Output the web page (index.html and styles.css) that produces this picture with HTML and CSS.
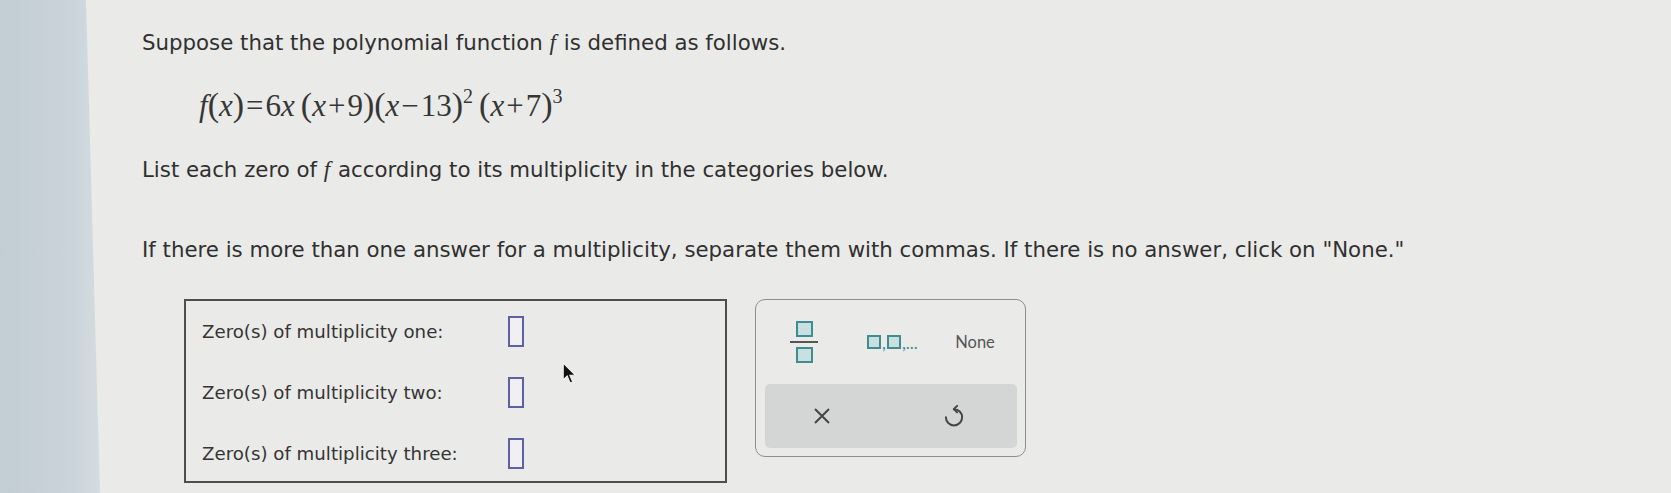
FILE: index.html
```html
<!DOCTYPE html>
<html lang="en">
<head>
<meta charset="utf-8">
<title>Polynomial zeros</title>
<link rel="stylesheet" href="styles.css">
</head>
<body>
<div class="edge"></div>
<main class="main">
  <p class="text line1">Suppose that the polynomial function <i class="fn">f</i> is defined as follows.</p>
  <div class="formula"><i>f</i><span class="par">(</span><i>x</i><span class="par">)</span><span class="op">=</span>6<i>x</i><span class="gap"></span><span class="par">(</span><i>x</i><span class="op">+</span>9<span class="par">)(</span><i>x</i><span class="op">−</span>13<span class="par">)</span><sup>2</sup><span class="gap"></span><span class="par">(</span><i>x</i><span class="op">+</span>7<span class="par">)</span><sup>3</sup></div>
  <p class="text line3">List each zero of <i class="fn">f</i> according to its multiplicity in the categories below.</p>
  <p class="text line4">If there is more than one answer for a multiplicity, separate them with commas. If there is no answer, click on "None."</p>
  <div class="answer">
    <div class="box">
      <div class="label">Zero(s) of multiplicity one:</div><div class="field"></div>
      <div class="label">Zero(s) of multiplicity two:</div><div class="field"></div>
      <div class="label">Zero(s) of multiplicity three:</div><div class="field"></div>
    </div>
    <div class="panel">
      <div class="tools">
        <div class="tool">
          <div class="frac"><span class="sq"></span><span class="bar"></span><span class="sq"></span></div>
        </div>
        <div class="tool">
          <div class="list"><span class="sq small"></span><span class="cm">,</span><span class="sq small"></span><span class="cm">,...</span></div>
        </div>
        <div class="tool none">None</div>
      </div>
      <div class="actions">
        <div class="act act-x">
          <svg width="20" height="20" viewBox="0 0 20 20"><path d="M3 3 L17 17 M17 3 L3 17" stroke="#454545" stroke-width="2" fill="none"/></svg>
        </div>
        <div class="act">
          <svg width="30" height="30" viewBox="0 0 24 24"><path d="M12 6.5 A6.5 6.5 0 1 1 5.5 13" stroke="#454545" stroke-width="1.6" fill="none" stroke-linecap="round"/><path d="M14.5 3.9 L11.8 6.5 L14.5 9.1" stroke="#454545" stroke-width="1.6" fill="none" stroke-linecap="round" stroke-linejoin="round"/></svg>
        </div>
      </div>
    </div>
  </div>
</main>
<svg class="cursor" width="15" height="23" viewBox="0 0 14 22"><path d="M1 1 L1 17 L4.8 13.4 L7.6 20 L10 19 L7.3 12.6 L12.5 12.6 Z" fill="#111" stroke="#f2f2f2" stroke-width="1"/></svg>
</body>
</html>
```

FILE: styles.css
```css
html, body {
  margin: 0;
  padding: 0;
}
body {
  width: 1671px;
  height: 493px;
  overflow: hidden;
  display: flex;
  background: #eaeae8;
  color: #303030;
  font-family: "DejaVu Sans", Verdana, sans-serif;
  position: relative;
}
.edge {
  width: 100px;
  flex: 0 0 100px;
  background: linear-gradient(90deg, #c3cdd4 0%, #c9d3d9 70%, #d4dce0 100%);
  clip-path: polygon(0 0, 86px 0, 100px 100%, 0 100%);
}
.main {
  flex: 1;
  padding: 31px 0 0 42px;
}
.text {
  margin: 0;
  font-size: 21.3px;
  line-height: 24px;
  white-space: nowrap;
}
.fn {
  font-family: "Liberation Serif", serif;
  font-size: 23px;
  margin-right: 1px;
}
.formula {
  margin: 33px 0 0 57px;
  font-family: "Liberation Serif", "Times New Roman", serif;
  font-size: 31px;
  line-height: 36px;
  color: #363636;
  white-space: nowrap;
}
.formula .par {
  font-size: 34px;
  line-height: 0;
}
.formula sup {
  font-size: 20px;
  line-height: 0;
  vertical-align: 13px;
}
.formula .op {
  margin: 0 2px;
}
.formula .gap {
  display: inline-block;
  width: 6px;
}
.line3 {
  margin-top: 34px;
}
.line4 {
  margin-top: 56px;
}
.answer {
  display: flex;
  align-items: flex-start;
  gap: 28px;
  margin: 37px 0 0 42px;
}
.box {
  border: 2px solid #4e4e4e;
  display: grid;
  grid-template-columns: 306px 16px;
  grid-auto-rows: 31px;
  row-gap: 30px;
  align-items: center;
  padding: 15px 0 0 16px;
  box-sizing: border-box;
  width: 543px;
  height: 184px;
}
.label {
  font-size: 18.2px;
  color: #353535;
  white-space: nowrap;
}
.field {
  width: 16px;
  height: 31px;
  box-sizing: border-box;
  border: 2px solid #5c60a6;
  background: #f0f0f4;
}
.panel {
  width: 271px;
  height: 158px;
  box-sizing: border-box;
  border: 1.5px solid #8e8e8e;
  border-radius: 10px;
  margin-top: 0;
  padding: 0 8px 8px 9px;
  display: flex;
  flex-direction: column;
}
.tools {
  height: 84px;
  display: grid;
  grid-template-columns: repeat(3, 1fr);
  align-items: center;
  justify-items: center;
}
.frac {
  display: flex;
  flex-direction: column;
  align-items: center;
  margin-left: -6px;
}
.sq {
  display: block;
  width: 17px;
  height: 16px;
  box-sizing: border-box;
  border: 2px solid #3f8c91;
  background: #c9e0e0;
}
.bar {
  display: block;
  width: 28px;
  height: 2px;
  background: #555;
  margin: 4px 0;
}
.list {
  display: flex;
  align-items: flex-end;
  font-family: "Lato", "Open Sans", sans-serif;
  font-size: 17px;
  color: #3f8c91;
  margin-left: 4px;
}
.sq.small {
  width: 14px;
  height: 14px;
  margin-bottom: 2px;
}
.cm {
  line-height: 17px;
  margin: 0 1px;
}
.none {
  font-family: "Lato", "Open Sans", sans-serif;
  font-size: 16.5px;
  color: #555;
}
.actions {
  flex: 1;
  background: #d4d6d6;
  border-radius: 5px;
  display: grid;
  grid-template-columns: 1fr 1fr;
  align-items: center;
  justify-items: center;
}
.act {
  display: flex;
  align-items: center;
  justify-content: center;
}
.act-x {
  margin-right: 12px;
}
.cursor {
  position: absolute;
  left: 562px;
  top: 362px;
}
```
